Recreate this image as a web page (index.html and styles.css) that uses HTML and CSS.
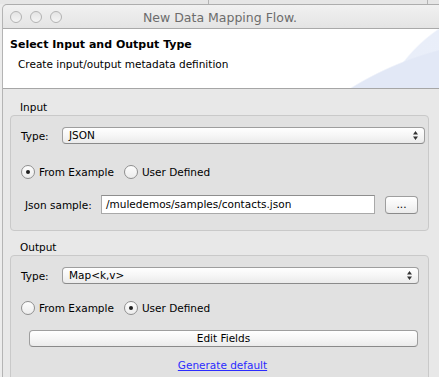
FILE: index.html
```html
<!DOCTYPE html>
<html>
<head>
<meta charset="utf-8">
<link rel="stylesheet" href="styles.css">
</head>
<body>
<div class="backdrop"></div>
<div class="window">
  <div class="titlebar">
    <div class="lights"><span class="light"></span><span class="light"></span><span class="light"></span></div>
    <div class="title">New Data Mapping Flow.</div>
  </div>
  <div class="header">
    <div class="h-title">Select Input and Output Type</div>
    <div class="h-sub">Create input/output metadata definition</div>
  </div>
  <div class="content">
    <div class="group-label">Input</div>
    <div class="group group-in">
      <div class="row type-row">
        <span class="lbl">Type:</span>
        <div class="select sel-in"><span>JSON</span><svg class="arrows" width="5" height="9" viewBox="0 0 5 9"><path d="M0 3.5L2.5 0L5 3.5Z M0 5.5L5 5.5L2.5 9Z" fill="#333"/></svg></div>
      </div>
      <div class="row radio-row">
        <span class="radio"><span class="circle on"></span>From Example</span>
        <span class="radio"><span class="circle"></span>User Defined</span>
      </div>
      <div class="row json-row">
        <span class="json-lbl">Json sample:</span>
        <div class="input">/muledemos/samples/contacts.json</div>
        <div class="btn dots">...</div>
      </div>
    </div>
    <div class="group-label out-label">Output</div>
    <div class="group group-out">
      <div class="row type-row">
        <span class="lbl">Type:</span>
        <div class="select sel-out"><span>Map&lt;k,v&gt;</span><svg class="arrows" width="5" height="9" viewBox="0 0 5 9"><path d="M0 3.5L2.5 0L5 3.5Z M0 5.5L5 5.5L2.5 9Z" fill="#333"/></svg></div>
      </div>
      <div class="row radio-row radio-out">
        <span class="radio"><span class="circle"></span>From Example</span>
        <span class="radio"><span class="circle on"></span>User Defined</span>
      </div>
      <div class="row edit-row">
        <div class="btn edit">Edit Fields</div>
      </div>
      <div class="row link-row">
        <a class="link" href="#">Generate default</a>
      </div>
    </div>
  </div>
</div>
</body>
</html>
```
FILE: styles.css
```css
html, body {
  margin: 0;
  padding: 0;
}
body {
  width: 439px;
  height: 377px;
  overflow: hidden;
  background: #ececec;
  font-family: "DejaVu Sans", sans-serif;
  font-size: 10.5px;
  color: #000;
}
.backdrop {
  height: 4px;
  background:
    linear-gradient(to right, transparent 208px, #b4b4b4 208px, #b4b4b4 209px, transparent 209px, transparent 427px, #b4b4b4 427px, #b4b4b4 428px, transparent 428px),
    #e6e6e6;
}
.window {
  margin-left: 2px;
  border-top: 1px solid #adadad;
  border-left: 1px solid #b4b4b4;
  border-top-left-radius: 5px;
  background: #e8e8e8;
  height: 372px;
  overflow: hidden;
}
.titlebar {
  height: 23px;
  border-bottom: 1px solid #a9a9a9;
  border-top-left-radius: 5px;
  background: linear-gradient(#f1f1f1, #e4e4e4);
  display: flex;
  align-items: center;
}
.lights {
  display: flex;
  gap: 8px;
  margin-left: 7px;
  margin-top: 1px;
}
.light {
  width: 10px;
  height: 10px;
  border-radius: 50%;
  border: 1px solid #b3b3b3;
  background: linear-gradient(#e4e4e4, #f4f4f4);
}
.title {
  margin-left: 81px;
  font-size: 12.5px;
  color: #6c6c6c;
  margin-top: 1px;
}
.header {
  box-sizing: border-box;
  height: 60px;
  border-bottom: 1px solid #a6a6a6;
  padding-left: 7px;
  padding-top: 9px;
  background:
    radial-gradient(circle at 520px 338px, #e2e8f6 0, #e2e8f6 327px, rgba(255,255,255,0) 328.5px),
    radial-gradient(circle at 520px 125px, #edf1fa 0, #e9eef9 150px, rgba(255,255,255,0) 151.5px),
    #fff;
}
.h-title {
  font-weight: bold;
  font-size: 11px;
  line-height: 13px;
}
.h-sub {
  margin-top: 7px;
  margin-left: 8px;
  line-height: 13px;
}
.content {
  padding-top: 12px;
}
.group-label {
  line-height: 13px;
  height: 13px;
  margin-left: 17px;
  margin-bottom: 1px;
}
.out-label {
  margin-top: 10px;
}
.group {
  margin-left: 7px;
  margin-right: 10px;
  border: 1px solid #c9c9c9;
  border-radius: 4px;
  background: #e1e1e1;
  padding-left: 10px;
}
.group-in {
  height: 114px;
}
.group-out {
  height: 140px;
}
.row {
  display: flex;
  align-items: center;
}
.type-row {
  margin-top: 11px;
  height: 17px;
}
.lbl {
  width: 41px;
  flex: none;
}
.select {
  flex: 1;
  height: 17px;
  box-sizing: border-box;
  border: 1px solid #9e9e9e;
  border-bottom-color: #8a8a8a;
  border-radius: 4px;
  background: linear-gradient(#ffffff, #f6f6f6 50%, #ebebeb);
  display: flex;
  align-items: center;
  justify-content: space-between;
  padding: 0 6px 0 6px;
  line-height: 15px;
}
.sel-in {
  margin-right: 3px;
}
.sel-out {
  margin-right: 9px;
}
.arrows {
  display: block;
}
.radio-row {
  margin-top: 21px;
  height: 14px;
  gap: 10px;
}
.radio-out {
  margin-top: 17px;
}
.radio {
  display: flex;
  align-items: center;
  gap: 4px;
  line-height: 14px;
}
.circle {
  width: 14px;
  height: 14px;
  box-sizing: border-box;
  border-radius: 50%;
  border: 1px solid #8f8f8f;
  background: linear-gradient(#fdfdfd, #ececec);
  display: flex;
  align-items: center;
  justify-content: center;
}
.circle.on::after {
  content: "";
  width: 4px;
  height: 4px;
  border-radius: 50%;
  background: #202020;
}
.json-row {
  margin-top: 16px;
  height: 19px;
}
.json-lbl {
  width: 76px;
  padding-left: 4px;
  flex: none;
}
.input {
  width: 274px;
  height: 19px;
  box-sizing: border-box;
  background: #fff;
  border: 1px solid #a9a9a9;
  border-top-color: #8e8e8e;
  padding-left: 4px;
  line-height: 17px;
  flex: none;
}
.btn {
  box-sizing: border-box;
  border: 1px solid #9e9e9e;
  border-bottom-color: #8a8a8a;
  border-radius: 4px;
  background: linear-gradient(#ffffff, #f6f6f6 50%, #ebebeb);
  text-align: center;
}
.dots {
  margin-left: 10px;
  width: 33px;
  height: 18px;
  line-height: 14px;
  flex: none;
}
.edit-row {
  margin-top: 15px;
  height: 17px;
  padding-left: 8px;
}
.edit {
  width: 389px;
  height: 17px;
  line-height: 15px;
}
.link-row {
  margin-top: 12px;
  justify-content: center;
  padding-right: 4px;
  line-height: 13px;
}
.link {
  color: #2b2bff;
  text-decoration: underline;
}
```
